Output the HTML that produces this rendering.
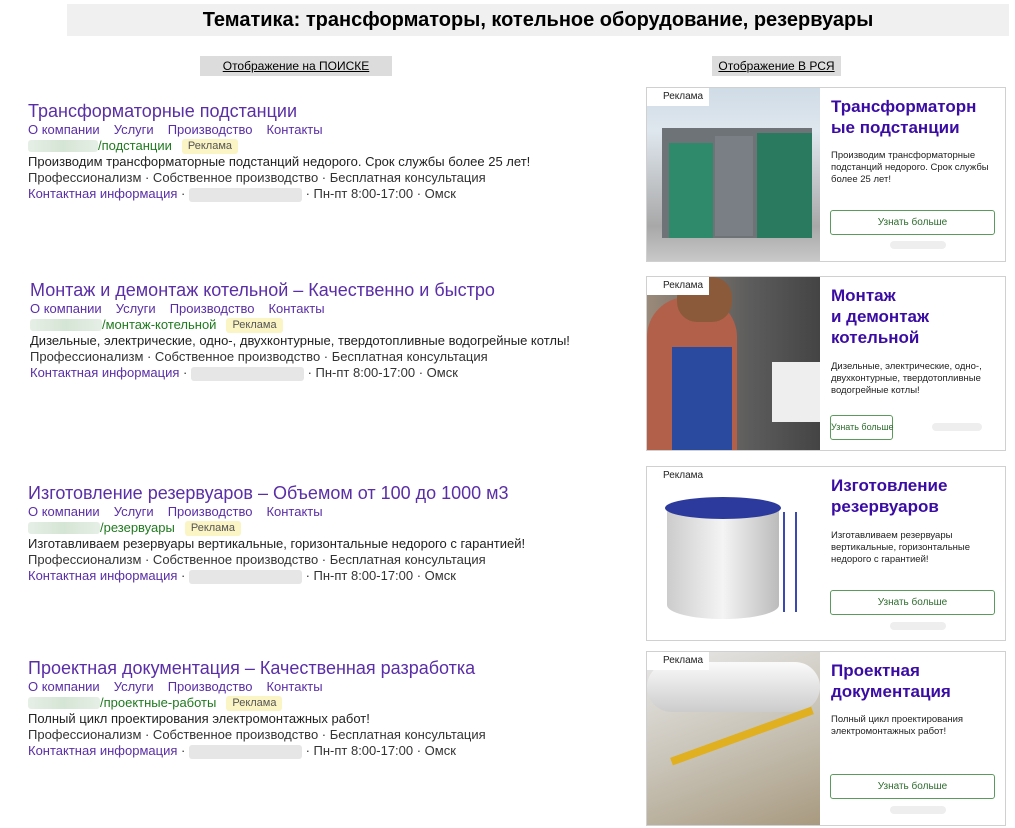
<!DOCTYPE html>
<html><head><meta charset="utf-8"><style>
*{margin:0;padding:0;box-sizing:border-box}
body{width:1015px;height:828px;background:#fff;font-family:"Liberation Sans",sans-serif;position:relative;overflow:hidden;color:#333}
.hdr{position:absolute;left:67px;top:4px;width:942px;height:32px;background:#f0f0f0;text-align:center;font:bold 20px/32px "Liberation Sans",sans-serif;color:#000}
.sub{position:absolute;top:56px;height:20px;background:#dcdcdc;font:12px/20px "Liberation Sans",sans-serif;color:#000;text-align:center;text-decoration:underline;white-space:nowrap}
.ad{position:absolute;font-size:13px;line-height:16px;white-space:nowrap}
.t{font-size:18px;line-height:21px;color:#5a2ea6}
.l{color:#5a2ea6}
.l span{margin-right:14px}
.u{color:#1f7a1f;height:16px;display:flex;align-items:center}
.blur{display:inline-block;height:12px;background:linear-gradient(90deg,#e6efe6,#d5e5d5,#e6efe6);border-radius:3px}
.gb{display:inline-block;height:14px;background:#e6e6e6;border-radius:3px;vertical-align:middle}
.tag{background:#fbf4c4;color:#555;padding:0 6px;margin-left:10px;border-radius:3px;line-height:15px;font-size:11px}
.d{color:#222}
.card{position:absolute;left:646px;width:360px;height:175px;border:1px solid #d0d0d0;background:#fff}
.img{position:absolute;left:0;top:0;width:173px;height:173px;overflow:hidden}
.rk{position:absolute;left:0;top:0;background:#fff;font-size:10px;padding:3px 6px 4px 16px;color:#222;z-index:2}
.ct{position:absolute;left:184px;top:8px;width:170px;font-weight:bold;font-size:17px;line-height:21px;color:#3a0ca3}
.cd{position:absolute;left:184px;width:170px;font-size:9.5px;line-height:12px;color:#222}
.btn{position:absolute;left:183px;width:165px;height:25px;border:1px solid #5b9a5b;border-radius:3px;font-size:10px;line-height:23px;text-align:center;color:#2d6b2d;white-space:nowrap}
.cb{position:absolute;height:8px;background:#eee;border-radius:4px}
</style></head><body>
<div class="hdr">Тематика: трансформаторы, котельное оборудование, резервуары</div>
<div class="sub" style="left:200px;width:192px">Отображение на ПОИСКЕ</div>
<div class="sub" style="left:712px;width:129px">Отображение В РСЯ</div>

<div class="ad" style="left:28px;top:101px">
<div class="t">Трансформаторные подстанции</div>
<div class="l"><span>О компании</span><span>Услуги</span><span>Производство</span><span>Контакты</span></div>
<div class="u"><span class="blur" style="width:70px"></span>/подстанции<span class="tag">Реклама</span></div>
<div class="d">Производим трансформаторные подстанций недорого. Срок службы более 25 лет!</div>
<div>Профессионализм · Собственное производство · Бесплатная консультация</div>
<div><span class="l">Контактная информация</span> · <span class="gb" style="width:113px"></span> · Пн-пт 8:00-17:00 · Омск</div>
</div>

<div class="ad" style="left:30px;top:280px">
<div class="t">Монтаж и демонтаж котельной – Качественно и быстро</div>
<div class="l"><span>О компании</span><span>Услуги</span><span>Производство</span><span>Контакты</span></div>
<div class="u"><span class="blur" style="width:72px"></span>/монтаж-котельной<span class="tag">Реклама</span></div>
<div class="d">Дизельные, электрические, одно-, двухконтурные, твердотопливные водогрейные котлы!</div>
<div>Профессионализм · Собственное производство · Бесплатная консультация</div>
<div><span class="l">Контактная информация</span> · <span class="gb" style="width:113px"></span> · Пн-пт 8:00-17:00 · Омск</div>
</div>

<div class="ad" style="left:28px;top:483px">
<div class="t">Изготовление резервуаров – Объемом от 100 до 1000 м3</div>
<div class="l"><span>О компании</span><span>Услуги</span><span>Производство</span><span>Контакты</span></div>
<div class="u"><span class="blur" style="width:72px"></span>/резервуары<span class="tag">Реклама</span></div>
<div class="d">Изготавливаем резервуары вертикальные, горизонтальные недорого с гарантией!</div>
<div>Профессионализм · Собственное производство · Бесплатная консультация</div>
<div><span class="l">Контактная информация</span> · <span class="gb" style="width:113px"></span> · Пн-пт 8:00-17:00 · Омск</div>
</div>

<div class="ad" style="left:28px;top:658px">
<div class="t">Проектная документация – Качественная разработка</div>
<div class="l"><span>О компании</span><span>Услуги</span><span>Производство</span><span>Контакты</span></div>
<div class="u"><span class="blur" style="width:72px"></span>/проектные-работы<span class="tag">Реклама</span></div>
<div class="d">Полный цикл проектирования электромонтажных работ!</div>
<div>Профессионализм · Собственное производство · Бесплатная консультация</div>
<div><span class="l">Контактная информация</span> · <span class="gb" style="width:113px"></span> · Пн-пт 8:00-17:00 · Омск</div>
</div>

<div class="card" style="top:87px">
<div class="img" style="background:linear-gradient(#cfdbe6 0,#dfe7ee 25%,#a8a8a8 80%,#c8c8c8 100%)">
<div style="position:absolute;left:15px;top:40px;width:150px;height:110px;background:#6e7378"></div>
<div style="position:absolute;left:22px;top:55px;width:44px;height:95px;background:#2e8a6a"></div>
<div style="position:absolute;left:68px;top:48px;width:38px;height:100px;background:#7a7f86"></div>
<div style="position:absolute;left:110px;top:45px;width:55px;height:105px;background:#2a7a60"></div>
</div>
<div class="rk">Реклама</div>
<div class="ct">Трансформаторн ые подстанции</div>
<div class="cd" style="top:62px">Производим трансформаторные подстанций недорого. Срок службы более 25 лет!</div>
<div class="btn" style="top:122px">Узнать больше</div>
<div class="cb" style="left:243px;top:153px;width:56px"></div>
</div>

<div class="card" style="top:276px">
<div class="img" style="background:linear-gradient(90deg,#9a8a7a,#5c5c5c 60%,#444)">
<div style="position:absolute;left:0;top:20px;width:90px;height:153px;background:#b3604a;border-radius:40px 40px 0 0"></div>
<div style="position:absolute;left:30px;top:0;width:55px;height:45px;background:#8b5a3a;border-radius:20px"></div>
<div style="position:absolute;left:25px;top:70px;width:60px;height:103px;background:#2a4aa0"></div>
<div style="position:absolute;left:125px;top:85px;width:48px;height:60px;background:#eee"></div>
</div>
<div class="rk">Реклама</div>
<div class="ct">Монтаж<br>и демонтаж котельной</div>
<div class="cd" style="top:84px">Дизельные, электрические, одно-, двухконтурные, твердотопливные водогрейные котлы!</div>
<div class="btn" style="top:138px;width:63px;font-size:9px">Узнать больше</div>
<div class="cb" style="left:285px;top:146px;width:50px"></div>
</div>

<div class="card" style="top:466px">
<div class="img" style="background:#fff">
<div style="position:absolute;left:20px;top:40px;width:112px;height:112px;background:linear-gradient(90deg,#ccc,#f4f4f4 50%,#bbb);border-radius:0 0 55px 55px/0 0 14px 14px"></div>
<div style="position:absolute;left:18px;top:30px;width:116px;height:22px;background:#2b3a9c;border-radius:50%"></div>
<div style="position:absolute;left:136px;top:45px;width:14px;height:100px;border:2px solid #3a4ab0;border-top:none;border-bottom:none"></div>
</div>
<div class="rk">Реклама</div>
<div class="ct">Изготовление резервуаров</div>
<div class="cd" style="top:63px">Изготавливаем резервуары вертикальные, горизонтальные недорого с гарантией!</div>
<div class="btn" style="top:123px">Узнать больше</div>
<div class="cb" style="left:243px;top:155px;width:56px"></div>
</div>

<div class="card" style="top:651px">
<div class="img" style="background:linear-gradient(160deg,#e8e8e8,#c9c4b8 50%,#a89a80)">
<div style="position:absolute;left:0;top:10px;width:173px;height:50px;background:linear-gradient(#fafafa,#ccc);border-radius:25px"></div>
<div style="position:absolute;left:20px;top:80px;width:150px;height:8px;background:#e0b020;transform:rotate(-20deg)"></div>
</div>
<div class="rk">Реклама</div>
<div class="ct">Проектная документация</div>
<div class="cd" style="top:62px">Полный цикл проектирования электромонтажных работ!</div>
<div class="btn" style="top:122px">Узнать больше</div>
<div class="cb" style="left:243px;top:154px;width:56px"></div>
</div>
</body></html>
